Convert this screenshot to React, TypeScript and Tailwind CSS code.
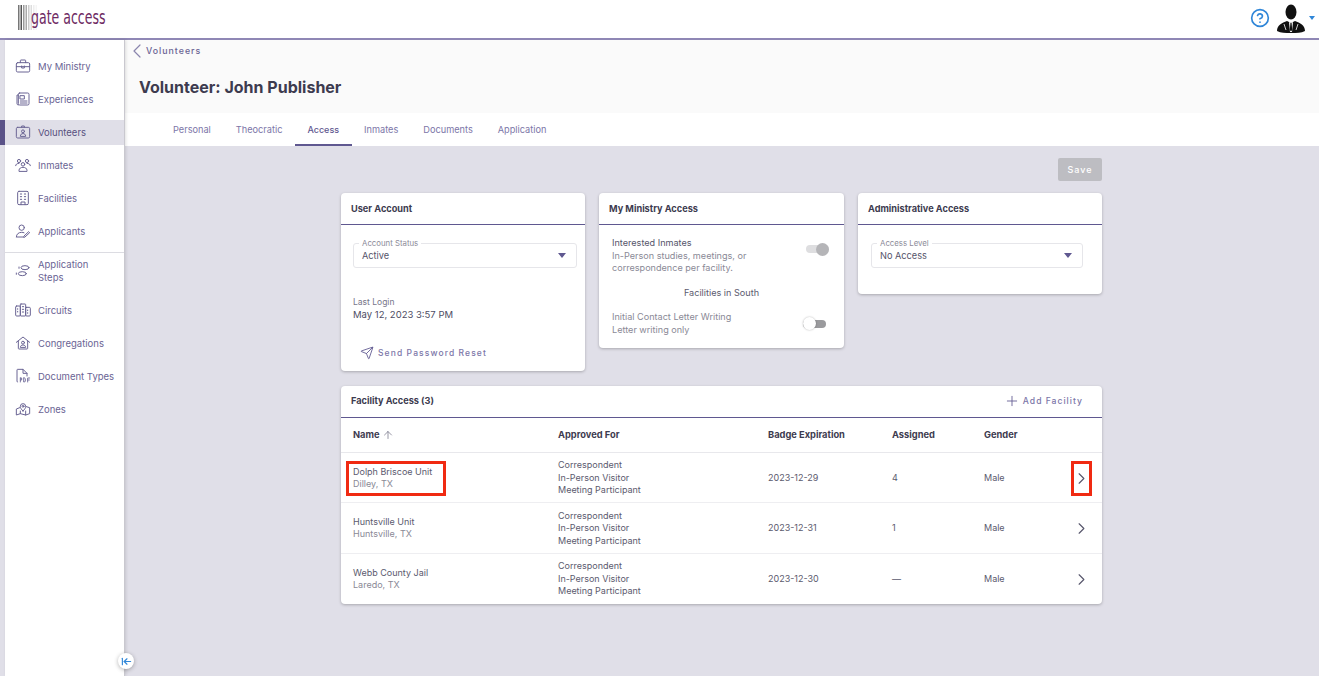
import { ArrowLeftToLine, ArrowUp, ChevronLeft, ChevronRight, CircleHelp, Plus, Send } from "lucide-react";
import type { ReactNode } from "react";

const Ico = ({ children }: { children: ReactNode }) => (
  <svg viewBox="0 0 24 24" className="ml-px h-[16px] w-[16px] shrink-0" fill="none" stroke="#6a6494" strokeWidth="1.5" strokeLinecap="round" strokeLinejoin="round">
    {children}
  </svg>
);

const navTop = [
  {
    label: "My Ministry",
    icon: (
      <Ico>
        <rect x="2" y="7" width="20" height="14" rx="2" />
        <path d="M8 7V4a1 1 0 0 1 1-1h6a1 1 0 0 1 1 1v3M2 13h20M10 12v3h4v-3" />
      </Ico>
    ),
  },
  {
    label: "Experiences",
    icon: (
      <Ico>
        <rect x="5" y="3" width="16" height="18" rx="2" />
        <path d="M5 6H3v13a2 2 0 0 0 2 2M8 7h6v5H8zM8 15h10M8 18h10" />
      </Ico>
    ),
  },
  {
    label: "Volunteers",
    active: true,
    icon: (
      <Ico>
        <rect x="2" y="5" width="20" height="16" rx="2" />
        <path d="M10 5V3h4v2" />
        <circle cx="12" cy="11" r="2.2" />
        <path d="M8 18c0-2.5 2-3.6 4-3.6s4 1.1 4 3.6z" />
      </Ico>
    ),
  },
  {
    label: "Inmates",
    icon: (
      <Ico>
        <circle cx="6" cy="6" r="2.4" />
        <circle cx="18" cy="6" r="2.4" />
        <circle cx="12" cy="11" r="2.6" />
        <path d="M1 13c0-2 2-3.500 5-3.500M23 13c0-2-2-3.500-5-3.500M6 21v-1c0-3 3-4.500 6-4.500s6 1.500 6 4.500v1z" />
      </Ico>
    ),
  },
  {
    label: "Facilities",
    icon: (
      <Ico>
        <rect x="4" y="2" width="16" height="20" rx="2" />
        <path d="M8 6h2M14 6h2M8 10h2M14 10h2M8 14h2M14 14h2M9 22v-4h6v4" />
      </Ico>
    ),
  },
  {
    label: "Applicants",
    icon: (
      <Ico>
        <circle cx="10" cy="7" r="4" />
        <path d="M2 21c0-4.500 3.500-7 8-7 1.500 0 2.500.2 3.500.6M3 21h9M15 21l7-6.500-1.500-1.500-7 6.500-.5 1.500z" />
      </Ico>
    ),
  },
];

const navBottom = [
  {
    label: "Application Steps",
    two: true,
    icon: (
      <Ico>
        <ellipse cx="15" cy="7" rx="6" ry="3" />
        <ellipse cx="11" cy="16" rx="6" ry="3" />
        <path d="M6 6v2M2 15v2" />
      </Ico>
    ),
  },
  {
    label: "Circuits",
    icon: (
      <Ico>
        <rect x="1" y="6" width="7" height="15" rx="1.500" />
        <rect x="8" y="3" width="8" height="18" rx="1" />
        <rect x="16" y="8" width="7" height="13" rx="1.500" />
        <path d="M11 7h2M11 11h2M11 15h2M4 10v1M4 14v1M19 12v1M19 16v1" />
      </Ico>
    ),
  },
  {
    label: "Congregations",
    icon: (
      <Ico>
        <path d="M2 11l10-8 10 8M5 9v11a1 1 0 0 0 1 1h12a1 1 0 0 0 1-1V9" />
        <circle cx="12" cy="11.500" r="2.200" />
        <path d="M8 18c0-2 2-3 4-3s4 1 4 3z" />
      </Ico>
    ),
  },
  {
    label: "Document Types",
    icon: (
      <Ico>
        <path d="M4 21a1 1 0 0 1-1-1V3a1 1 0 0 1 1-1h8l6 6v4M12 2v6h6" />
        <path d="M8 15v6M8 15h2v3H8M13 15v6h1.500l1-1.500V16.500L14.500 15zM19 21v-6h3M19 18h2.500" strokeWidth="1.300" />
      </Ico>
    ),
  },
  {
    label: "Zones",
    icon: (
      <Ico>
        <path d="M7 10L2 12v9l6-2 8 2 6-2v-9l-5-1.500M8 19v-4M16 21v-6" />
        <path d="M12 15c-2.500-2.500-4-4.500-4-7a4 4 0 0 1 8 0c0 2.500-1.500 4.500-4 7z" />
        <circle cx="12" cy="8" r="1.400" />
      </Ico>
    ),
  },
];

const approved = ["Correspondent", "In-Person Visitor", "Meeting Participant"];

const rows = [
  { name: "Dolph Briscoe Unit", city: "Dilley, TX", badge: "2023-12-29", assigned: "4", marked: true },
  { name: "Huntsville Unit", city: "Huntsville, TX", badge: "2023-12-31", assigned: "1" },
  { name: "Webb County Jail", city: "Laredo, TX", badge: "2023-12-30", assigned: "—" },
];

const tabs = ["Personal", "Theocratic", "Access", "Inmates", "Documents", "Application"];

function NavItem({ item }: { item: { label: string; icon: ReactNode; active?: boolean; two?: boolean } }) {
  return (
    <div
      className={`flex items-center gap-[7px] pl-[9px] pr-1 text-[9.5px] leading-[13px] ${item.two ? "h-[37px]" : "h-[25px]"} ${
        item.active ? "-ml-[5px] border-l-[5px] border-[#5a5288] bg-[#e0dfe8] text-[#57507f]" : "text-[#6a6494]"
      }`}
    >
      {item.icon}
      <span className={item.two ? "w-[62px]" : ""}>{item.label}</span>
    </div>
  );
}

function CardHead({ children, right }: { children: ReactNode; right?: ReactNode }) {
  return (
    <div className={`flex h-[32px] items-center justify-between border-b-[1.5px] border-[#5f5890] px-[10px] text-[9.2px] font-bold text-[#3d3b4f] ${right ? "pb-px" : ""}`}>
      <span>{children}</span>
      {right}
    </div>
  );
}

function Select({ label, value, width }: { label: string; value: string; width: string }) {
  return (
    <div className={`relative flex h-[25px] items-center justify-between rounded-[3px] border border-[#e6e6ea] pl-2 pr-[10px] text-[9.2px] text-[#55546a] ${width}`}>
      <span className="absolute -top-[6px] left-[5px] bg-white px-[3px] text-[7.8px] leading-[11px] text-[#8c8b99]">{label}</span>
      <span>{value}</span>
      <span className="h-0 w-0 border-x-[4px] border-t-[5px] border-x-transparent border-t-[#5f5890]" />
    </div>
  );
}

export default function App() {
  return (
    <div className="flex h-[676px] w-[1319px] flex-col overflow-hidden bg-[#e0dfe8] font-['Inter',sans-serif]">
      <header className="flex h-[40px] shrink-0 items-center justify-between border-b-2 border-[#8f87b5] bg-white pb-[3px] pl-[18px] pr-[4px]">
        <div className="flex items-center">
          <svg width="22" height="25" viewBox="0 0 22 25">
            <rect x="0" width="1.500" height="25" fill="#777" />
            <rect x="2.500" width="1.500" height="25" fill="#555" />
            <rect x="5" width="1.500" height="25" fill="#999" />
            <rect x="7.500" width="1.500" height="25" fill="#aaa" />
            <rect x="10" width="1.500" height="25" fill="#ccc" />
            <rect x="12.500" width="1.500" height="25" fill="#ddd" />
            <rect x="15" width="1.500" height="25" fill="#eee" />
            <rect x="17.500" width="1.500" height="25" fill="#f5f5f5" />
          </svg>
          <span className="ml-[-9px] inline-block origin-left scale-x-[.66] font-['DejaVu_Sans',sans-serif] text-[19px] leading-none text-[#6e2a63]">gate access</span>
        </div>
        <div className="flex items-center gap-[3px]">
          <CircleHelp className="mr-[3px] h-[20px] w-[20px] text-[#2f86d8]" strokeWidth={2} />
          <svg width="30" height="30" viewBox="0 0 30 30">
            <ellipse cx="15" cy="9" rx="5.500" ry="7.500" fill="#111" />
            <path d="M1 28c0-6 5-8 10-10l4 2 4-2c5 2 10 4 10 10-4 2-8 2-14 2S5 30 1 28z" fill="#111" />
            <path d="M13 19l2 1 2-1-1 10h-2z" fill="#fff" />
            <path d="M14.400 20h1.200l.6 7-1.200 1.500-1.200-1.500z" fill="#111" />
            <path d="M8 21l2 6M22 21l-2 6" stroke="#fff" strokeWidth=".8" />
          </svg>
          <span className="h-0 w-0 border-x-[3px] border-t-[4px] border-x-transparent border-t-[#2f86d8]" />
        </div>
      </header>

      <div className="flex min-h-0 flex-1">
        <aside className="relative ml-[5px] w-[120px] shrink-0 border-r border-[#c9c8cf] bg-white shadow-[1px_0_3px_rgba(0,0,0,0.12)]">
          <nav className="flex flex-col gap-[8px] pt-[13.500px]">
            {navTop.map((n) => (
              <NavItem key={n.label} item={n} />
            ))}
          </nav>
          <div className="mt-[8px] border-t border-[#dcdce2]" />
          <nav className="flex flex-col gap-[8px]">
            {navBottom.map((n) => (
              <NavItem key={n.label} item={n} />
            ))}
          </nav>
          <span className="absolute -right-[10px] bottom-[7px] flex h-[16px] w-[16px] items-center justify-center rounded-full bg-white shadow-[0_1px_4px_rgba(0,0,0,0.3)]">
            <ArrowLeftToLine className="h-[11px] w-[11px] text-[#2f86d8]" strokeWidth={2.5} />
          </span>
        </aside>

        <main className="min-w-0 flex-1">
          <div className="h-[73px] bg-[#fafafa] pl-[7px]">
            <div className="flex items-center pt-[4px] text-[8.800px] font-medium leading-[14px] tracking-[1px] text-[#6a6494]">
              <ChevronLeft className="-my-[5px] -ml-[7px] -mr-[3px] h-[24px] w-[24px] text-[#8a85ad]" strokeWidth={1.2} />
              <span>Volunteers</span>
            </div>
            <h1 className="pl-[7px] pt-[18px] text-[16px] font-bold leading-[22px] text-[#3d3b4f]">Volunteer: John Publisher</h1>
          </div>

          <div className="flex h-[33px] bg-white pl-[35.500px]">
            {tabs.map((t) => (
              <div
                key={t}
                className={`flex items-center px-[12.500px] ${
                  t === "Access" ? "border-b-2 border-[#5f5890] pt-[2px] text-[9px] font-medium text-[#5f5890]" : "text-[9.200px] text-[#7c76a8]"
                }`}
              >
                {t}
              </div>
            ))}
          </div>

          <div className="pr-px">
            <div className="mx-auto w-[761px] pt-[12px]">
              <div className="flex justify-end">
                <button className="h-[23px] w-[44px] rounded-[2px] bg-[#bdbdc2] text-[9px] font-medium tracking-[1px] text-white">Save</button>
              </div>

              <div className="mt-[12px] flex items-start gap-[14px]">
                <section className="h-[178px] w-[244px] rounded-[4px] bg-white shadow-[0_1px_3px_rgba(0,0,0,0.25)]">
                  <CardHead>User Account</CardHead>
                  <div className="px-[12px] pt-[18px]">
                    <Select label="Account Status" value="Active" width="w-[224px]" />
                    <p className="mt-[28px] text-[8.500px] leading-[12px] text-[#77768a]">Last Login</p>
                    <p className="text-[9.500px] leading-[13px] text-[#4e4d63]">May 12, 2023 3:57 PM</p>
                    <div className="mt-[25px] flex items-center gap-[4px] pl-[7px] text-[8.500px] font-medium tracking-[1.100px] text-[#7c76a8]">
                      <Send className="h-[14px] w-[14px] text-[#5f5890]" strokeWidth={1.5} />
                      <span>Send Password Reset</span>
                    </div>
                  </div>
                </section>

                <section className="h-[155px] w-[245px] rounded-[4px] bg-white shadow-[0_1px_3px_rgba(0,0,0,0.25)]">
                  <CardHead>My Ministry Access</CardHead>
                  <div className="px-[13px] pt-[12px] text-[9.100px] leading-[12.500px]">
                    <div className="flex items-start justify-between">
                      <div>
                        <p className="text-[#55546a]">Interested Inmates</p>
                        <p className="w-[150px] text-[#8a8996]">In-Person studies, meetings, or correspondence per facility.</p>
                      </div>
                      <span className="mr-[2px] mt-[8px] flex h-[8px] w-[23px] items-center justify-end rounded-full bg-[#dedee0]">
                        <span className="h-[13px] w-[13px] shrink-0 rounded-full bg-[#b5b5b8]" />
                      </span>
                    </div>
                    <p className="mt-[12px] text-center text-[#5b5a6e]">Facilities in South</p>
                    <div className="mt-[12px] flex items-center justify-between">
                      <div className="text-[#8a8996]">
                        <p>Initial Contact Letter Writing</p>
                        <p>Letter writing only</p>
                      </div>
                      <span className="mr-[5px] flex h-[8px] w-[23px] items-center rounded-full bg-[#9a9a9d]">
                        <span className="h-[13px] w-[13px] shrink-0 rounded-full bg-white shadow-[0_0_2px_rgba(0,0,0,0.3)]" />
                      </span>
                    </div>
                  </div>
                </section>

                <section className="h-[101px] w-[244px] rounded-[4px] bg-white shadow-[0_1px_3px_rgba(0,0,0,0.25)]">
                  <CardHead>Administrative Access</CardHead>
                  <div className="pl-[13px] pt-[18px]">
                    <Select label="Access Level" value="No Access" width="w-[212px]" />
                  </div>
                </section>
              </div>

              <section className="mt-[15px] rounded-[4px] bg-white shadow-[0_1px_3px_rgba(0,0,0,0.25)]">
                <CardHead
                  right={
                    <span className="flex items-center gap-[3px] pr-[9px] text-[8.600px] font-medium tracking-[1px] text-[#7c76a8]">
                      <Plus className="h-[16px] w-[16px] text-[#5f5890]" strokeWidth={1.3} />
                      Add Facility
                    </span>
                  }
                >
                  Facility Access (3)
                </CardHead>
                <div className="grid h-[35px] grid-cols-[205px_210px_124px_92px_86px_22px] items-center border-b border-[#e8e8ec] pl-[12px] text-[9.300px] font-bold text-[#3d3b4f]">
                  <span className="flex items-center gap-[2px]">
                    Name <ArrowUp className="h-[12px] w-[12px] text-[#77768a]" strokeWidth={1.5} />
                  </span>
                  <span>Approved For</span>
                  <span>Badge Expiration</span>
                  <span>Assigned</span>
                  <span>Gender</span>
                </div>
                {rows.map((r) => (
                  <div
                    key={r.name}
                    className="grid h-[50.300px] grid-cols-[205px_210px_124px_92px_86px_22px] items-center border-b border-[#eeeef1] pl-[12px] pt-px text-[9px] leading-[12.500px] text-[#5b5a6e] last:border-b-0"
                  >
                    <div className="relative">
                      <p>{r.name}</p>
                      <p className="text-[#8a8996]">{r.city}</p>
                      {r.marked && <span className="absolute -left-[7px] -top-[5px] h-[35px] w-[100px] border-[3px] border-[#f02a12]" />}
                    </div>
                    <div>
                      {approved.map((a) => (
                        <p key={a}>{a}</p>
                      ))}
                    </div>
                    <span>{r.badge}</span>
                    <span>{r.assigned}</span>
                    <span>Male</span>
                    <span className="relative flex justify-center">
                      <ChevronRight className="-my-[2px] h-[19px] w-[19px] shrink-0 text-[#55546a]" strokeWidth={1.4} />
                      {r.marked && <span className="absolute left-px -top-[10px] h-[35px] w-[21px] border-[3px] border-[#f02a12]" />}
                    </span>
                  </div>
                ))}
              </section>
            </div>
          </div>
        </main>
      </div>
    </div>
  );
}
